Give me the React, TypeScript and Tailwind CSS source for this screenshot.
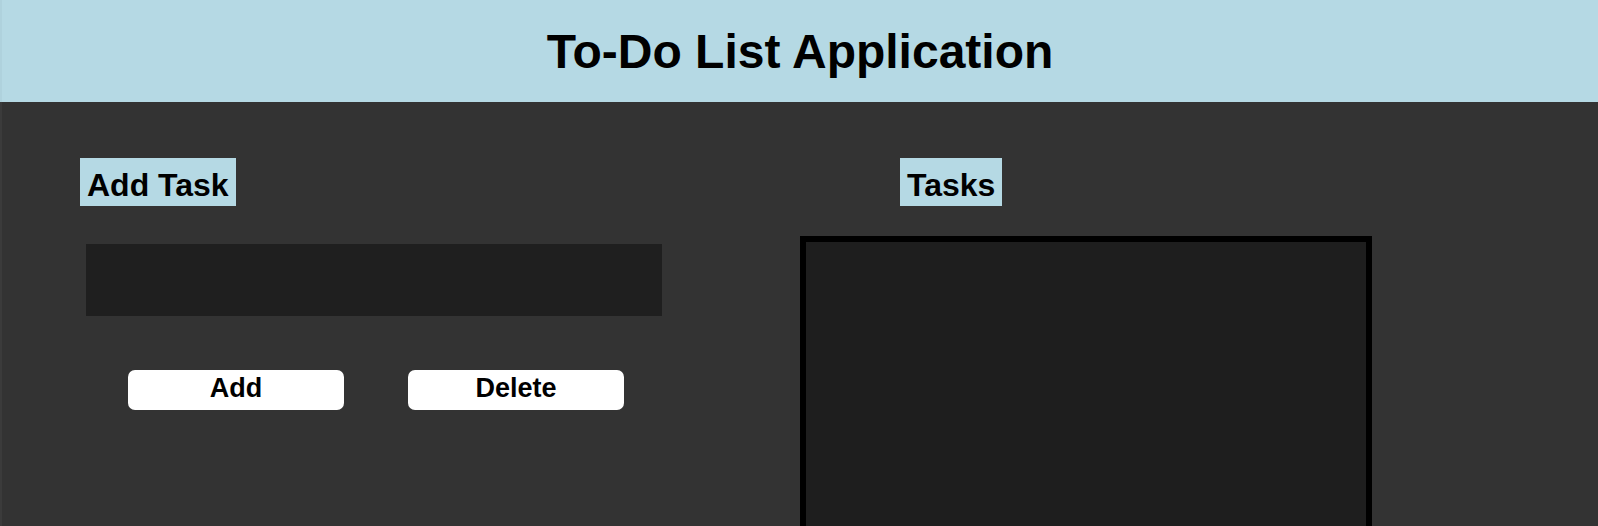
import React from "react";

export default function App() {
  const font = { fontFamily: '"Liberation Sans", Arial, Helvetica, sans-serif' };
  return (
    <div className="w-[1598px] h-[526px] overflow-hidden bg-[#333333] flex flex-col" style={font}>
      <header className="h-[102px] shrink-0 bg-[#b5d9e4] flex items-center justify-center border-l-[2px] border-[#afd2dd]">
        <h1 className="text-[48px] font-bold text-black leading-none pt-[2px]">To-Do List Application</h1>
      </header>
      <main className="flex flex-1 pt-[56px] border-l-[2px] border-[#3b3b3b]">
        <section className="w-[798px] shrink-0 pl-[78px] flex flex-col items-start">
          <div className="h-[48px] bg-[#b5d9e4] px-[7px] pt-[11px] text-[32px] leading-[32px] font-bold text-black">
            Add Task
          </div>
          <input
            type="text"
            className="mt-[38px] ml-[6px] w-[576px] h-[72px] bg-[#1f1f1f] outline-none border-0 text-white px-2 text-[20px]"
          />
          <div className="mt-[54px] ml-[48px] flex gap-[64px]">
            <button className="w-[216px] h-[40px] bg-white rounded-[7px] text-[27px] font-bold text-black leading-none flex items-center justify-center pb-[3px]">
              Add
            </button>
            <button className="w-[216px] h-[40px] bg-white rounded-[7px] text-[27px] font-bold text-black leading-none flex items-center justify-center pb-[3px]">
              Delete
            </button>
          </div>
        </section>
        <section className="flex flex-col items-start">
          <div className="ml-[100px] h-[48px] bg-[#b5d9e4] px-[7px] pt-[11px] text-[32px] leading-[32px] font-bold text-black">
            Tasks
          </div>
          <div className="mt-[30px] w-[572px] h-[320px] border-[6px] border-black bg-[#1e1e1e]"></div>
        </section>
      </main>
    </div>
  );
}
